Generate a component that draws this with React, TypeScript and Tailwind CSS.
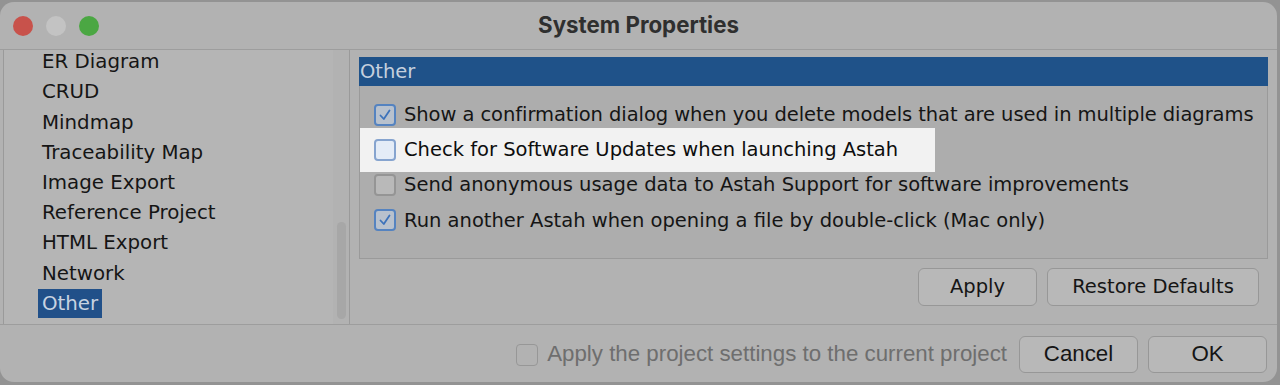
import React from "react";

const content = { fontFamily: '"DejaVu Sans", "Liberation Sans", sans-serif' };
const helv = { fontFamily: '"Liberation Sans", Arial, sans-serif' };

function Check({ checked, focus, disabled }: { checked?: boolean; focus?: boolean; disabled?: boolean }) {
  if (checked) {
    return (
      <div className="w-[22px] h-[22px] shrink-0 rounded-[4px] border-2 border-[#5583c0] bg-[#b8c1cd] flex items-center justify-center">
        <svg width="16" height="16" viewBox="0 0 16 16" fill="none">
          <path d="M3.5 8.5 L6.8 12 L12.5 3.5" stroke="#3d72ba" strokeWidth="1.8" strokeLinecap="round" strokeLinejoin="round" />
        </svg>
      </div>
    );
  }
  if (focus) {
    return <div className="w-[22px] h-[22px] shrink-0 rounded-[4px] border-2 border-[#86a4cf] bg-[#e4ecf7]" />;
  }
  if (disabled) {
    return <div className="w-[22px] h-[22px] shrink-0 rounded-[4px] border border-[#979797] bg-[#b2b2b2]" />;
  }
  return <div className="w-[22px] h-[22px] shrink-0 rounded-[4px] border-2 border-[#959595] bg-[#b9b9b9]" />;
}

const items = [
  "ER Diagram",
  "CRUD",
  "Mindmap",
  "Traceability Map",
  "Image Export",
  "Reference Project",
  "HTML Export",
  "Network",
];

export default function App() {
  return (
    <div className="w-[1280px] h-[385px] bg-[#939393] pt-[2px] overflow-hidden">
      <div className="w-[1277px] h-[380px] bg-[#b2b2b2] rounded-[14px] flex flex-col overflow-hidden">
        {/* title bar */}
        <div className="h-[48px] shrink-0 grid grid-cols-[1fr_auto_1fr] items-center border-b border-[#9d9d9d]">
          <div className="flex items-center gap-[13px] pl-[13px]">
            <div className="w-[20px] h-[20px] rounded-full bg-[#c8524b]" />
            <div className="w-[20px] h-[20px] rounded-full bg-[#c3c3c3]" />
            <div className="w-[20px] h-[20px] rounded-full bg-[#4ba743]" />
          </div>
          <div className="text-[22.3px] font-bold text-[#2f2f2f] -mt-[1px]" style={{ fontFamily: 'Inter, "Liberation Sans", sans-serif' }}>
            System Properties
          </div>
          <div />
        </div>

        {/* body */}
        <div className="h-[274px] shrink-0 flex">
          {/* list */}
          <div className="ml-[3px] w-[347px] h-full border-l border-r border-[#9a9a9a] bg-[#b5b5b5] flex overflow-hidden">
            <div className="flex-1 pl-[34px] -mt-[3px]" style={content}>
              {items.map((t) => (
                <div key={t} className="h-[30.2px] flex items-center pl-[4px] text-[19.8px] text-[#151515] leading-none">
                  {t}
                </div>
              ))}
              <div className="h-[30.2px] flex items-center">
                <span className="h-[29px] flex items-center px-[4px] bg-[#215089] text-[#c8d3e1] text-[19.8px] leading-none">
                  Other
                </span>
              </div>
            </div>
            <div className="w-[16px] h-full bg-[#b2b2b2] flex flex-col justify-end pb-[5px] items-center">
              <div className="w-[9px] h-[97px] rounded-full bg-[#a7a7a7]" />
            </div>
          </div>

          {/* right panel */}
          <div className="ml-[9px] w-[909px] pt-[7px] flex flex-col" style={content}>
            <div className="h-[29px] bg-[#1f5289] text-[#c5d0de] text-[19.5px] flex items-center pl-[1px] leading-none">
              Other
            </div>
            <div className="h-[173px] border border-t-0 border-[#9a9a9a] bg-[#adadad] pt-[11px] flex flex-col text-[19.5px] text-[#151515] leading-none">
              <div className="h-[35px] shrink-0 flex items-center pl-[14px] gap-[8px]">
                <Check checked />
                <span className="tracking-[-0.07px]">Show a confirmation dialog when you delete models that are used in multiple diagrams</span>
              </div>
              <div className="h-[44px] shrink-0 -mt-[4px] -mb-[5px] w-[575px] bg-[#f2f2f2] flex items-center pl-[14px] gap-[8px] text-[#0d0d0d]">
                <Check focus />
                <span>Check for Software Updates when launching Astah</span>
              </div>
              <div className="h-[35.5px] shrink-0 flex items-center pl-[14px] gap-[8px]">
                <Check />
                <span>Send anonymous usage data to Astah Support for software improvements</span>
              </div>
              <div className="h-[35.5px] shrink-0 flex items-center pl-[14px] gap-[8px]">
                <Check checked />
                <span>Run another Astah when opening a file by double-click (Mac only)</span>
              </div>
            </div>
            <div className="mt-[9px] flex justify-end gap-[10px] pr-[9px]">
              <button className="w-[119px] h-[38px] rounded-[6px] border border-[#979797] bg-[#b8b8b8] text-[19.5px] text-[#151515] leading-none">
                Apply
              </button>
              <button className="w-[212px] h-[38px] rounded-[6px] border border-[#979797] bg-[#b8b8b8] text-[19.5px] text-[#151515] leading-none">
                Restore Defaults
              </button>
            </div>
          </div>
        </div>

        {/* footer */}
        <div className="flex-1 border-t border-[#9d9d9d] flex items-center justify-end pr-[10px] pt-[2px]" style={helv}>
          <Check disabled />
          <span className="ml-[9px] text-[22.3px] text-[#6e6e6e] leading-none">Apply the project settings to the current project</span>
          <button className="ml-[12px] w-[119px] h-[37px] rounded-[6px] border border-[#979797] bg-[#b8b8b8] text-[22.3px] text-[#151515] leading-none">
            Cancel
          </button>
          <button className="ml-[10px] w-[119px] h-[37px] rounded-[6px] border border-[#979797] bg-[#b8b8b8] text-[22.3px] text-[#151515] leading-none">
            OK
          </button>
        </div>
      </div>
    </div>
  );
}
